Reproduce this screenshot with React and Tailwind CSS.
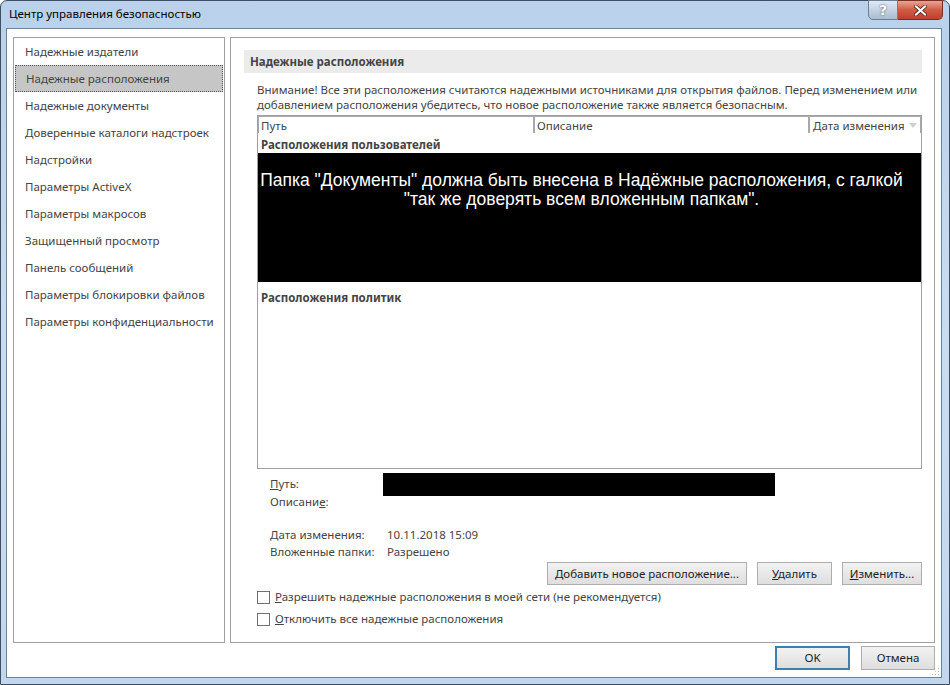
import React from "react";

const navItems = [
  "Надежные издатели",
  "Надежные расположения",
  "Надежные документы",
  "Доверенные каталоги надстроек",
  "Надстройки",
  "Параметры ActiveX",
  "Параметры макросов",
  "Защищенный просмотр",
  "Панель сообщений",
  "Параметры блокировки файлов",
  "Параметры конфиденциальности",
];

function Btn({ children, className = "", def = false }) {
  return (
    <div
      className={
        "flex items-center justify-center h-[23px] text-[11.5px] text-[#222] bg-gradient-to-b from-[#f2f2f2] to-[#dedede] " +
        (def ? "border-2 border-[#3c7fb1] " : "border border-[#adadad] ") +
        className
      }
    >
      {children}
    </div>
  );
}

export default function App() {
  return (
    <div
      className="w-[950px] h-[685px] overflow-hidden bg-white"
      style={{ fontFamily: '"Noto Sans", "Open Sans", sans-serif' }}
    >
      <div className="relative w-[950px] h-[685px] rounded-t-[7px] border border-[#3d4f63] bg-gradient-to-b from-[#b9d1ea] via-[#cadcf0] to-[#c2d7ee] flex flex-col pl-[5px] pr-[7px] pb-[6px]">
        {/* title bar */}
        <div className="h-[27px] flex items-start relative">
          <div className="pl-[3px] pt-[5px] text-[11.5px] text-black leading-[16px]">
            Центр управления безопасностью
          </div>
          <div className="absolute right-[-1px] top-[-1px] flex">
            <div className="w-[30px] h-[20px] border border-[#6e7f93] rounded-bl-[5px] bg-gradient-to-b from-[#dfe9f4] via-[#c4d3e3] to-[#a9bccf] flex items-center justify-center text-white text-[14px] font-bold leading-none" style={{ fontFamily: '"DejaVu Sans", sans-serif', textShadow: "0 0 2px #3a4a5a" }}>
              ?
            </div>
            <div className="w-[45px] h-[20px] border border-l-0 border-[#7a2d24] rounded-br-[5px] bg-gradient-to-b from-[#e8a493] via-[#cf5b44] to-[#c0402a] flex items-center justify-center">
              <svg width="13" height="11" viewBox="0 0 13 11">
                <path d="M2 1.5 L11 9.5 M11 1.5 L2 9.5" stroke="#3a1a14" strokeWidth="3.6" strokeLinecap="square" />
                <path d="M2 1.5 L11 9.5 M11 1.5 L2 9.5" stroke="#ffffff" strokeWidth="2.2" strokeLinecap="square" />
              </svg>
            </div>
          </div>
        </div>
        {/* client area */}
        <div className="flex-1 bg-white border border-[#6b8299] flex flex-col relative">
          <div className="flex mt-[8px] ml-[6px] h-[606px]">
            {/* left nav */}
            <div className="w-[212px] h-full border border-[#a0a0a0] px-[1px]">
              <div className="flex flex-col">
                {navItems.map((t, i) => (
                  <div
                    key={t}
                    className={
                      "h-[27px] flex items-center pl-[10px] text-[11.5px] text-[#444] " +
                      (i === 1 ? "bg-[#c6c6c6] border border-dotted border-[#555] pl-[9px]" : "")
                    }
                  >
                    {t}
                  </div>
                ))}
              </div>
            </div>
            {/* right panel */}
            <div className="ml-[5px] w-[705px] h-full border border-[#a0a0a0] flex flex-col pl-[13px] pr-[12px] pt-[12px]">
              <div className="h-[23px] bg-[#ebebeb] flex items-center pl-[6px] text-[11.5px] font-bold text-[#444]">
                Надежные расположения
              </div>
              <div className="pl-[13px] flex flex-col">
                <div className="mt-[9px] text-[11.5px] leading-[15px] text-[#444]">
                  Внимание! Все эти расположения считаются надежными источниками для открытия файлов. Перед изменением или добавлением расположения убедитесь, что новое расположение также является безопасным.
                </div>
                {/* table */}
                <div className="mt-[3px] h-[354px] border border-[#a0a0a0] flex flex-col">
                  <div className="flex h-[17px] bg-[#a9a9a9] gap-[2px] p-[1px] pb-0 text-[11.5px] text-[#444] leading-[15px]">
                    <div className="w-[274px] bg-white pl-[2px] flex items-center">Путь</div>
                    <div className="w-[273px] bg-white pl-[2px] flex items-center">Описание</div>
                    <div className="flex-1 bg-white pl-[3px] flex items-center justify-between pr-[3px]">
                      <span>Дата изменения</span>
                      <svg width="8" height="5" viewBox="0 0 8 5"><path d="M0 0 L8 0 L4 5 Z" fill="#d0d0d0" /></svg>
                    </div>
                  </div>
                  <div className="h-[20px] pl-[3px] pt-[3px] text-[11.5px] font-bold text-[#444] flex items-center">
                    Расположения пользователей
                  </div>
                  <div className="h-[129px] bg-black flex flex-col items-center pt-[18px] pr-[16px]">
                    <div
                      className="text-white text-[17.5px] leading-[19px] text-center whitespace-nowrap"
                      style={{ fontFamily: '"Liberation Sans", Arial, sans-serif' }}
                    >
                      Папка "Документы" должна быть внесена в Надёжные расположения, с галкой
                      <br />
                      "так же доверять всем вложенным папкам".
                    </div>
                  </div>
                  <div className="h-[32px] pl-[3px] text-[11.5px] font-bold text-[#444] flex items-center">
                    Расположения политик
                  </div>
                </div>
                {/* details */}
                <div className="flex flex-col text-[11.5px] text-[#444] mt-[2px] pl-[13px]">
                  <div className="flex h-[19px] items-start relative">
                    <span className="mt-[5px] leading-[15px]"><u>П</u>уть:</span>
                    <div className="absolute left-[113px] top-[2px] w-[392px] h-[23px] bg-black" />
                  </div>
                  <div className="h-[18px] leading-[18px] mt-[3px]">
                    Описани<u>е</u>:
                  </div>
                  <div className="h-[15px]" />
                  <div className="flex h-[17px] items-center">
                    <span className="w-[117px]">Дата изменения:</span>
                    <span>10.11.2018 15:09</span>
                  </div>
                  <div className="flex h-[17px] items-center">
                    <span className="w-[117px]">Вложенные папки:</span>
                    <span>Разрешено</span>
                  </div>
                </div>
                <div className="flex justify-end gap-[10px] mt-[2px]">
                  <Btn className="w-[200px]"><span><u>Д</u>обавить новое расположение...</span></Btn>
                  <Btn className="w-[75px]"><span><u>У</u>далить</span></Btn>
                  <Btn className="w-[80px]"><span><u>И</u>зменить...</span></Btn>
                </div>
                <div className="flex flex-col mt-[1px] text-[11.5px] text-[#444]">
                  <div className="flex items-center h-[22px]">
                    <div className="w-[13px] h-[13px] border border-[#707070] bg-white" />
                    <span className="ml-[5px]"><u>Р</u>азрешить надежные расположения в моей сети (не рекомендуется)</span>
                  </div>
                  <div className="flex items-center h-[22px]">
                    <div className="w-[13px] h-[13px] border border-[#707070] bg-white" />
                    <span className="ml-[5px]"><u>О</u>тключить все надежные расположения</span>
                  </div>
                </div>
              </div>
            </div>
          </div>
          <div className="flex justify-end gap-[11px] mt-[3px] mr-[6px]">
            <Btn def className="w-[75px] h-[24px]">OK</Btn>
            <Btn className="w-[74px] h-[24px]">Отмена</Btn>
          </div>
          <svg className="absolute right-[1px] bottom-[1px]" width="8" height="8" viewBox="0 0 8 8">
            <g fill="#b8c4d0">
              <rect x="6" y="0" width="1" height="1" />
              <rect x="3" y="3" width="1" height="1" />
              <rect x="6" y="3" width="1" height="1" />
              <rect x="0" y="6" width="1" height="1" />
              <rect x="3" y="6" width="1" height="1" />
              <rect x="6" y="6" width="1" height="1" />
            </g>
          </svg>
        </div>
      </div>
    </div>
  );
}
